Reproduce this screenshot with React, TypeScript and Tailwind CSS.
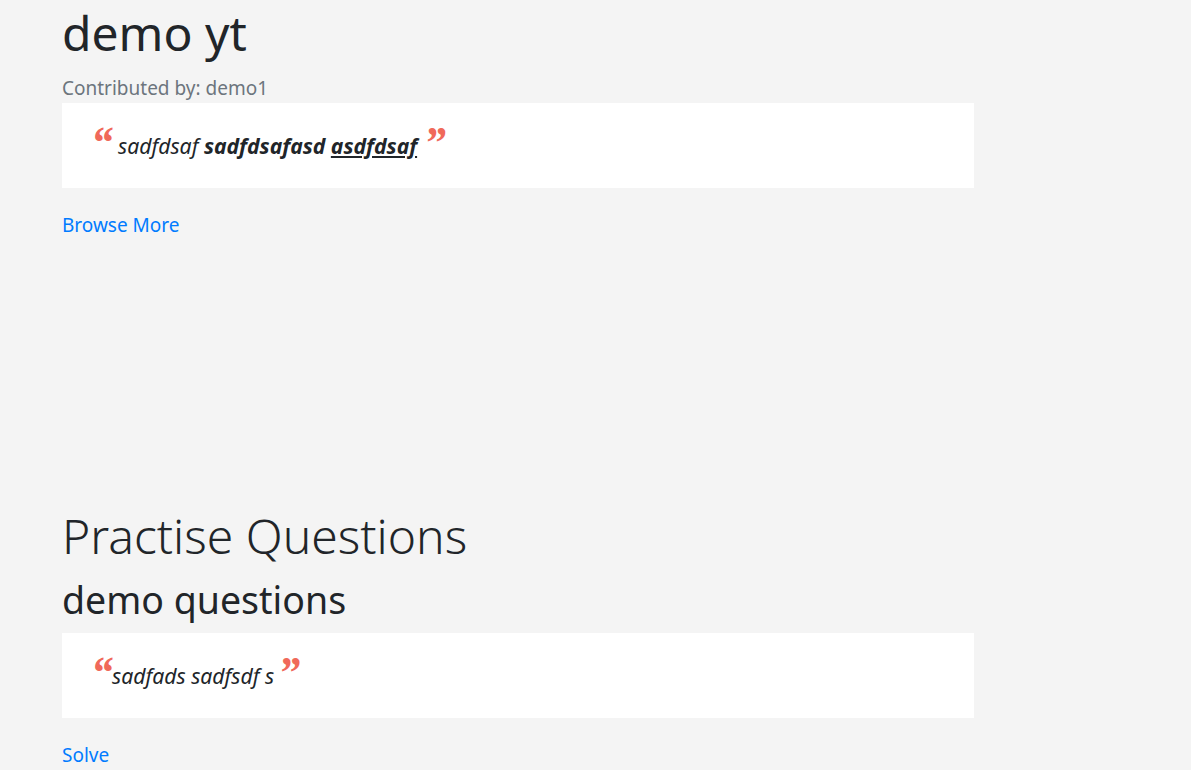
import React from 'react';

type Part = { text: string; bold?: boolean; underline?: boolean };

type QuoteBoxProps = {
  parts: Part[];
  spaced?: boolean;
};

const markClass = "text-[#f0695a] font-bold italic font-['Liberation_Serif',serif] text-[44px] leading-[44px]";

const QuoteBox: React.FC<QuoteBoxProps> = ({ parts, spaced }) => (
  <div className="bg-white w-[912px] h-[85px] pl-[29px] pt-[18px]">
    <p className="flex items-start italic text-[#212529]">
      <span className={markClass + ' ' + (spaced ? 'mr-[5px]' : '-mr-[1px]')}>&ldquo;</span>
      <span className="mt-[11px] text-[21.2px] leading-[28px]">
        {parts.map((p, i) => (
          <React.Fragment key={i}>
            {i > 0 && ' '}
            <span className={(p.bold ? 'font-bold ' : '') + (p.underline ? 'underline' : '')}>{p.text}</span>
          </React.Fragment>
        ))}
      </span>
      <span className={markClass + ' ' + (spaced ? 'ml-[7px]' : 'ml-[4px]')}>&rdquo;</span>
    </p>
  </div>
);

export default function App() {
  return (
    <div className="min-h-[770px] bg-[#f4f4f4] font-['Noto_Sans',sans-serif] text-[#212529] pl-[62px] pt-[3px]">
      <h1 className="text-[48px] leading-[60px]">demo yt</h1>
      <p className="mt-[13px] text-[19px] leading-[24px] text-[#6c757d]">Contributed by: demo1</p>
      <div className="mt-[3px]">
        <QuoteBox
          spaced
          parts={[
            { text: 'sadfdsaf' },
            { text: 'sadfdsafasd', bold: true },
            { text: 'asdfdsaf', bold: true, underline: true },
          ]}
        />
      </div>
      <a href="#" className="block w-fit mt-[25px] text-[19px] leading-[24px] text-[#007bff]">
        Browse More
      </a>
      <h2 className="mt-[269px] text-[48px] font-light leading-[60px]">Practise Questions</h2>
      <h3 className="mt-[11px] text-[37.5px] leading-[46px]">demo questions</h3>
      <div className="mt-[10px]">
        <QuoteBox parts={[{ text: 'sadfads sadfsdf s' }]} />
      </div>
      <a href="#" className="block w-fit mt-[25px] text-[19px] leading-[24px] text-[#007bff]">
        Solve
      </a>
    </div>
  );
}
